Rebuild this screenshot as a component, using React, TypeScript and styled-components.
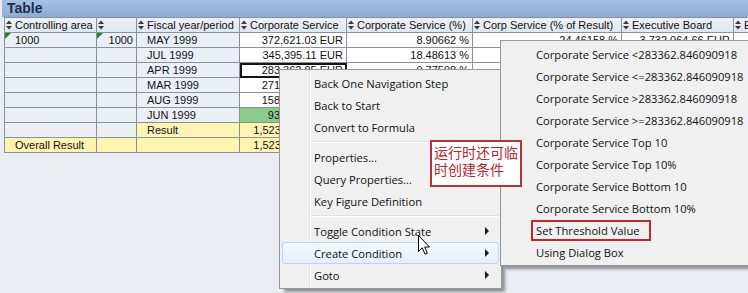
import React from "react";
import styled, { createGlobalStyle, css } from "styled-components";

const Global = createGlobalStyle`
  html, body { margin: 0; padding: 0; background: #eaeef3; }
  * { box-sizing: border-box; }
`;

const Page = styled.div`
  position: relative;
  width: 748px;
  height: 293px;
  overflow: hidden;
  background: #eaeef3;
  font-family: "Liberation Sans", Arial, sans-serif;
`;

const TitleBar = styled.div`
  height: 17px;
  margin-left: 2px;
  padding-left: 5px;
  background: linear-gradient(#a6c0e5, #8eaad6);
  color: #1c2b4c;
  font: bold 14px/17px "Liberation Sans", Arial, sans-serif;
`;

const Grid = styled.table`
  margin-left: 4px;
  border-collapse: collapse;
  table-layout: fixed;
  width: 789px;
  font-size: 11px;
  color: #111;
`;

type Kind = "head" | "char" | "data" | "result" | "green";

const bg: Record<Kind, string> = {
  head: "linear-gradient(#eef1f5, #e0e6ee)",
  char: "#ebf0f7",
  data: "#ffffff",
  result: "#fff5b3",
  green: "#8ccb8a",
};

const Cell = styled.td<{ $kind: Kind; $right?: boolean; $sel?: boolean; $flag?: boolean }>`
  position: relative;
  height: 14px;
  padding: 0 3px 0 ${(p) => (p.$kind === "head" ? "1px" : "10px")};
  line-height: 14px;
  border: 1px solid #8b9199;
  background: ${(p) => bg[p.$kind]};
  text-align: ${(p) => (p.$right ? "right" : "left")};
  font-weight: normal;
  white-space: nowrap;
  overflow: hidden;
  ${(p) =>
    p.$right &&
    css`
      padding-left: 2px;
    `}
  ${(p) =>
    p.$sel &&
    css`
      outline: 2px solid #151515;
      outline-offset: -2px;
    `}
  ${(p) =>
    p.$flag &&
    css`
      &::before {
        content: "";
        position: absolute;
        left: 0;
        top: 0;
        border-top: 6px solid #2f7d32;
        border-right: 6px solid transparent;
      }
    `}
`;

const HeadInner = styled.div`
  display: flex;
  align-items: center;
  gap: 3px;
`;

const Sort = () => (
  <svg width="6" height="10" viewBox="0 0 6 10">
    <path d="M0 4 L3 0.5 L6 4 Z" fill="#3b3b3b" />
    <path d="M0 6 L3 9.5 L6 6 Z" fill="#3b3b3b" />
  </svg>
);

const Menu = styled.div<{ $left: number; $top: number; $width: number; $z: number; $gutter?: boolean }>`
  position: absolute;
  left: ${(p) => p.$left}px;
  top: ${(p) => p.$top}px;
  width: ${(p) => p.$width}px;
  z-index: ${(p) => p.$z};
  padding: 2px;
  background: #f0f0f0;
  border: 1px solid #979797;
  box-shadow: 4px 4px 3px -1px rgba(0, 0, 0, 0.4);
  font-family: "Open Sans", "Noto Sans", sans-serif;
  font-size: 11.2px;
  color: #111;
  ${(p) =>
    p.$gutter &&
    css`
      &::before {
        content: "";
        position: absolute;
        left: 29px;
        top: 2px;
        bottom: 2px;
        width: 1px;
        background: #e2e3e3;
        border-right: 1px solid #ffffff;
        box-sizing: content-box;
      }
    `}
`;

const Item = styled.div<{ $hot?: boolean; $indent: number }>`
  position: relative;
  display: flex;
  align-items: center;
  height: 22px;
  padding-left: ${(p) => p.$indent}px;
  padding-right: 9px;
  border: 1px solid transparent;
  border-radius: 3px;
  white-space: nowrap;
  ${(p) =>
    p.$hot &&
    css`
      border-color: #b9d5f3;
      background: linear-gradient(#f5f9fe, #e4eef9);
    `}
`;

const Arrow = styled.span`
  margin-left: auto;
  width: 0;
  height: 0;
  border-top: 4px solid transparent;
  border-bottom: 4px solid transparent;
  border-left: 4px solid #1a1a1a;
`;

const Sep = styled.div`
  height: 8px;
  display: flex;
  align-items: center;
  padding-left: 29px;
  &::after {
    content: "";
    flex: 1;
    height: 1px;
    background: #e0e0e0;
    border-bottom: 1px solid #fff;
    box-sizing: content-box;
  }
`;

const Marked = styled.span`
  display: inline-block;
  margin-left: -5px;
  padding: 0 9px 0 3px;
  height: 21px;
  line-height: 17px;
  border: 2px solid #c1272d;
`;

const Note = styled.div`
  position: absolute;
  left: 430px;
  top: 140px;
  width: 92px;
  height: 47px;
  z-index: 4;
  padding: 2px 0 0 2px;
  background: #fff;
  border: 2px solid #b83434;
  color: #b3262a;
  font: 14px/17px "Noto Sans CJK SC", sans-serif;
  white-space: pre;
`;

const Cursor = styled.svg`
  position: absolute;
  left: 418px;
  top: 235px;
  z-index: 5;
`;

type Row = {
  c1?: string;
  c2?: string;
  c3: string;
  v: string[];
  kind?: "result" | "overall";
};

const rows: Row[] = [
  { c1: "1000", c2: "1000", c3: "MAY 1999", v: ["372,621.03 EUR", "8.90662 %", "24.46158 %", "3,732,064.66 EUR", ""] },
  { c3: "JUL 1999", v: ["345,395.11 EUR", "18.48613 %", "22.67396 %", "1,868,412.20 EUR", ""] },
  { c3: "APR 1999", v: ["283,362.85 EUR", "9.77598 %", "18.60183 %", "2,898,562.31 EUR", ""] },
  { c3: "MAR 1999", v: ["271,470.12 EUR", "7.85201 %", "17.82113 %", "3,457,341.07 EUR", ""] },
  { c3: "AUG 1999", v: ["158,204.37 EUR", "6.11043 %", "10.38551 %", "2,589,104.48 EUR", ""] },
  { c3: "JUN 1999", v: ["93,718.02 EUR", "3.42087 %", "6.15222 %", "2,739,601.95 EUR", ""] },
  { c3: "Result", v: ["1,523,311.04 EUR", "8.90662 %", "100.00000 %", "17,285,086.67 EUR", ""], kind: "result" },
  { c1: "Overall Result", c3: "", v: ["1,523,311.04 EUR", "8.90662 %", "100.00000 %", "17,285,086.67 EUR", ""], kind: "overall" },
];

const headers = ["Controlling area", "", "Fiscal year/period", "Corporate Service", "Corporate Service (%)", "Corp Service (% of Result)", "Executive Board", "EB"];
const widths = [92, 40, 103, 107, 126, 149, 112, 60];

const menuItems: (string | null | { t: string; arrow?: boolean; hot?: boolean })[] = [
  "Back One Navigation Step",
  "Back to Start",
  "Convert to Formula",
  null,
  "Properties...",
  "Query Properties...",
  "Key Figure Definition",
  null,
  { t: "Toggle Condition State", arrow: true },
  { t: "Create Condition", arrow: true, hot: true },
  { t: "Goto", arrow: true },
];

const subItems = [
  "Corporate Service <283362.846090918",
  "Corporate Service <=283362.846090918",
  "Corporate Service >283362.846090918",
  "Corporate Service >=283362.846090918",
  "Corporate Service Top 10",
  "Corporate Service Top 10%",
  "Corporate Service Bottom 10",
  "Corporate Service Bottom 10%",
  "Set Threshold Value",
  "Using Dialog Box",
];

export default function App() {
  return (
    <Page>
      <Global />
      <TitleBar>Table</TitleBar>
      <Grid>
        <colgroup>
          {widths.map((w, i) => (
            <col key={i} style={{ width: w }} />
          ))}
        </colgroup>
        <thead>
          <tr>
            {headers.map((h, i) => (
              <Cell as="th" key={i} $kind="head">
                <HeadInner>
                  <Sort />
                  <span>{h}</span>
                </HeadInner>
              </Cell>
            ))}
          </tr>
        </thead>
        <tbody>
          {rows.map((r, ri) => {
            const overall = r.kind === "overall";
            const result = r.kind === "result";
            const charKind: Kind = overall ? "result" : "char";
            const dataKind = (ci: number): Kind => {
              if (overall || result) return "result";
              if (ri === 5 && ci === 0) return "green";
              return "data";
            };
            return (
              <tr key={ri}>
                <Cell $kind={charKind} $flag={ri === 0}>{r.c1 ?? ""}</Cell>
                <Cell $kind={charKind} $right $flag={ri === 0}>{r.c2 ?? ""}</Cell>
                <Cell $kind={result ? "result" : charKind}>{r.c3}</Cell>
                {r.v.map((v, ci) => (
                  <Cell key={ci} $kind={dataKind(ci)} $right $sel={ri === 2 && ci === 0}>
                    {v}
                  </Cell>
                ))}
              </tr>
            );
          })}
        </tbody>
      </Grid>

      <Menu $left={279} $top={69} $width={223} $z={1} $gutter>
        {menuItems.map((m, i) => {
          if (m === null) return <Sep key={i} />;
          const it = typeof m === "string" ? { t: m } : m;
          return (
            <Item key={i} $indent={31} $hot={"hot" in it ? it.hot : false}>
              {it.t}
              {"arrow" in it && it.arrow ? <Arrow /> : null}
            </Item>
          );
        })}
      </Menu>

      <Menu $left={500} $top={40} $width={262} $z={3}>
        {subItems.map((s, i) => (
          <Item key={i} $indent={32}>
            {s === "Set Threshold Value" ? <Marked>{s}</Marked> : s}
          </Item>
        ))}
      </Menu>

      <Note>{"运行时还可临\n时创建条件"}</Note>

      <Cursor width="13" height="21" viewBox="0 0 13 21">
        <path
          d="M0.5 0.5 L0.5 16.5 L4.3 12.8 L7 19.2 L9.3 18.2 L6.7 12 L11.5 12 Z"
          fill="#fff"
          stroke="#000"
          strokeWidth="1"
          strokeLinejoin="miter"
        />
      </Cursor>
    </Page>
  );
}
